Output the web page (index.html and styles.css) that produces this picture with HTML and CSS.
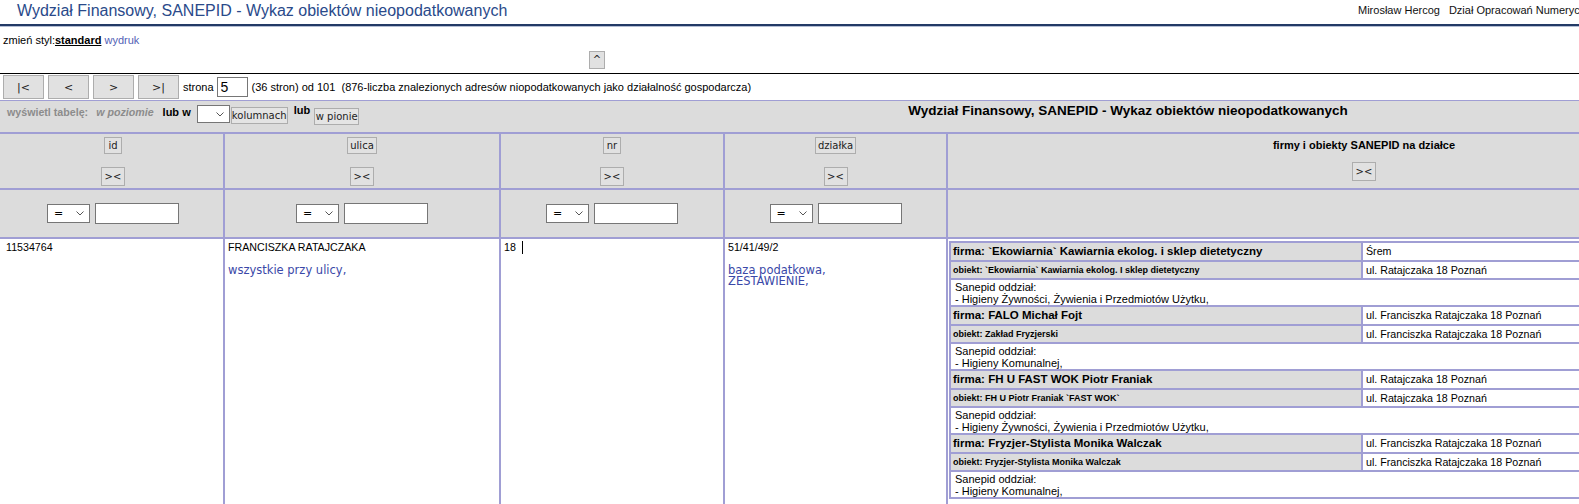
FILE: index.html
```html
<!DOCTYPE html>
<html lang="pl">
<head>
<meta charset="utf-8">
<title>Wydział Finansowy, SANEPID - Wykaz obiektów nieopodatkowanych</title>
<link rel="stylesheet" href="styles.css">
</head>
<body>
<div class="page">
  <header class="topbar">
    <h1 class="page-title">Wydział Finansowy, SANEPID - Wykaz obiektów nieopodatkowanych</h1>
    <div class="user"><span>Mirosław Hercog</span><span>Dział Opracowań Numerycznych</span></div>
  </header>

  <div class="style-switch">zmień styl:<a class="style-cur" href="#">standard</a> <a class="style-alt" href="#">wydruk</a></div>

  <div class="collapse-row"><button class="btn btn-up" type="button">^</button></div>

  <nav class="pager">
    <button class="btn btn-nav" type="button">|&lt;</button>
    <button class="btn btn-nav" type="button">&lt;</button>
    <button class="btn btn-nav" type="button">&gt;</button>
    <button class="btn btn-nav" type="button">&gt;|</button>
    <span class="pager-label">strona</span>
    <input class="pager-input" type="text" value="5">
    <span class="pager-info">(36 stron) od 101&nbsp; (876-liczba znalezionych adresów niopodatkowanych jako działalność gospodarcza)</span>
  </nav>

  <div class="toolbar">
    <span class="tb-muted tb-first">wyświetl tabelę:</span>
    <span class="tb-muted tb-italic">w poziomie</span>
    <span class="tb-strong tb-lubw">lub w</span>
    <span class="fake-select tb-select"><span></span><svg class="chev" width="8" height="5" viewBox="0 0 8 5"><path d="M0.5 0.5 L4 4 L7.5 0.5" fill="none" stroke="#555" stroke-width="1"/></svg></span>
    <button class="btn btn-tb tb-kol" type="button">kolumnach</button>
    <span class="tb-strong tb-lub">lub</span>
    <button class="btn btn-tb tb-pion" type="button">w pionie</button>
    <span class="tb-title">Wydział Finansowy, SANEPID - Wykaz obiektów nieopodatkowanych</span>
  </div>

  <div class="grid">
    <div class="hcell hcell-first"><button class="btn btn-col" type="button">id</button><button class="btn btn-sort" type="button">&gt;&lt;</button></div>
    <div class="hcell"><button class="btn btn-col" type="button">ulica</button><button class="btn btn-sort" type="button">&gt;&lt;</button></div>
    <div class="hcell"><button class="btn btn-col" type="button">nr</button><button class="btn btn-sort" type="button">&gt;&lt;</button></div>
    <div class="hcell"><button class="btn btn-col" type="button">działka</button><button class="btn btn-sort" type="button">&gt;&lt;</button></div>
    <div class="hcell"><span class="hcell-title">firmy i obiekty SANEPID na działce</span><button class="btn btn-sort btn-sort-wide" type="button">&gt;&lt;</button></div>

    <div class="fcell fcell-first"><span class="fake-select filt-select"><span>=</span><svg class="chev" width="8" height="5" viewBox="0 0 8 5"><path d="M0.5 0.5 L4 4 L7.5 0.5" fill="none" stroke="#555" stroke-width="1"/></svg></span><input class="filt-input" type="text"></div>
    <div class="fcell"><span class="fake-select filt-select"><span>=</span><svg class="chev" width="8" height="5" viewBox="0 0 8 5"><path d="M0.5 0.5 L4 4 L7.5 0.5" fill="none" stroke="#555" stroke-width="1"/></svg></span><input class="filt-input" type="text"></div>
    <div class="fcell"><span class="fake-select filt-select"><span>=</span><svg class="chev" width="8" height="5" viewBox="0 0 8 5"><path d="M0.5 0.5 L4 4 L7.5 0.5" fill="none" stroke="#555" stroke-width="1"/></svg></span><input class="filt-input" type="text"></div>
    <div class="fcell"><span class="fake-select filt-select"><span>=</span><svg class="chev" width="8" height="5" viewBox="0 0 8 5"><path d="M0.5 0.5 L4 4 L7.5 0.5" fill="none" stroke="#555" stroke-width="1"/></svg></span><input class="filt-input" type="text"></div>
    <div class="fcell"></div>

    <div class="dcell dcell-first">11534764</div>
    <div class="dcell">FRANCISZKA RATAJCZAKA<div class="links">wszystkie przy ulicy,</div></div>
    <div class="dcell">18 <span class="caret"></span></div>
    <div class="dcell">51/41/49/2<div class="links">baza podatkowa,<br>ZESTAWIENIE,</div></div>
    <div class="dcell dcell-nest">
      <div class="nest">
        <div class="n-name n-firma">firma: `Ekowiarnia` Kawiarnia ekolog. i sklep dietetyczny</div>
        <div class="n-addr n-addr-firma">Śrem</div>
        <div class="n-name n-obiekt">obiekt: `Ekowiarnia` Kawiarnia ekolog. I sklep dietetyczny</div>
        <div class="n-addr n-addr-obiekt">ul. Ratajczaka 18 Poznań</div>
        <div class="n-san">Sanepid oddział:<br>- Higieny Żywności, Żywienia i Przedmiotów Użytku,</div>

        <div class="n-name n-firma">firma: FALO Michał Fojt</div>
        <div class="n-addr n-addr-firma">ul. Franciszka Ratajczaka 18 Poznań</div>
        <div class="n-name n-obiekt">obiekt: Zakład Fryzjerski</div>
        <div class="n-addr n-addr-obiekt">ul. Franciszka Ratajczaka 18 Poznań</div>
        <div class="n-san">Sanepid oddział:<br>- Higieny Komunalnej,</div>

        <div class="n-name n-firma">firma: FH U FAST WOK Piotr Franiak</div>
        <div class="n-addr n-addr-firma">ul. Ratajczaka 18 Poznań</div>
        <div class="n-name n-obiekt">obiekt: FH U Piotr Franiak `FAST WOK`</div>
        <div class="n-addr n-addr-obiekt">ul. Ratajczaka 18 Poznań</div>
        <div class="n-san">Sanepid oddział:<br>- Higieny Żywności, Żywienia i Przedmiotów Użytku,</div>

        <div class="n-name n-firma">firma: Fryzjer-Stylista Monika Walczak</div>
        <div class="n-addr n-addr-firma">ul. Franciszka Ratajczaka 18 Poznań</div>
        <div class="n-name n-obiekt">obiekt: Fryzjer-Stylista Monika Walczak</div>
        <div class="n-addr n-addr-obiekt">ul. Franciszka Ratajczaka 18 Poznań</div>
        <div class="n-san">Sanepid oddział:<br>- Higieny Komunalnej,</div>
      </div>
    </div>
  </div>
</div>
</body>
</html>
```

FILE: styles.css
```css
html, body {
  margin: 0;
  padding: 0;
  overflow: hidden;
  background: #fff;
}

body {
  font-family: "Liberation Sans", Arial, sans-serif;
  color: #000;
}

.page {
  width: 1780px;
}

/* ---------- top header ---------- */
.topbar {
  display: grid;
  grid-template-columns: 1358px auto;
  height: 24px;
  border-bottom: 2px solid #233a66;
  box-shadow: 0 1px 0 #b4bed4;
}

.page-title {
  margin: 0;
  padding: 2px 0 0 17px;
  font-size: 16px;
  font-weight: normal;
  line-height: 18px;
  color: #2a4a8a;
  white-space: nowrap;
}

.user {
  display: flex;
  gap: 9px;
  padding-top: 4px;
  font-size: 11px;
  line-height: 13px;
  color: #111;
  white-space: nowrap;
}

/* ---------- style switch ---------- */
.style-switch {
  height: 13px;
  padding: 8px 0 0 3px;
  font-size: 11px;
  line-height: 13px;
}

.style-cur {
  color: #000;
  font-weight: bold;
  text-decoration: underline;
}

.style-alt {
  color: #5361b6;
  text-decoration: none;
}

.collapse-row {
  display: flex;
  align-items: flex-start;
  height: 22px;
  padding-top: 4px;
  border-bottom: 1px solid #000;
}

/* ---------- buttons ---------- */
.btn {
  margin: 0;
  padding: 0 2px;
  box-sizing: border-box;
  font-family: "DejaVu Sans", sans-serif;
  font-size: 10px;
  line-height: 1;
  color: #222;
  background: #e1e1e1;
  border: 1px solid #adadad;
  border-radius: 0;
}

.btn-up {
  width: 16px;
  height: 18px;
  margin-left: 589px;
  padding: 0;
  font-size: 10px;
}

.btn-nav {
  width: 41px;
  height: 24px;
  font-size: 11px;
}

.btn-tb {
  height: 17px;
  padding: 0;
  background: #e4e4e4;
}

.btn-col {
  min-width: 18px;
  height: 17px;
}

.btn-sort {
  width: 24px;
  height: 19px;
  margin-top: 13px;
  padding: 0;
}

.btn-sort-wide {
  margin-top: 10px;
}

/* ---------- pager ---------- */
.pager {
  display: flex;
  align-items: center;
  gap: 4px;
  height: 26px;
  padding-left: 3px;
  font-size: 11px;
  white-space: nowrap;
}

.pager-input {
  width: 31px;
  height: 20px;
  margin: 0 0 0 -1px;
  padding: 0 3px;
  box-sizing: border-box;
  font-family: "Liberation Sans", Arial, sans-serif;
  font-size: 14px;
  border: 1px solid #767676;
  border-radius: 0;
}

/* ---------- toolbar ---------- */
.toolbar {
  display: flex;
  align-items: flex-start;
  height: 31px;
  background: #dcdcdc;
  border-top: 1px solid #a09ed4;
  white-space: nowrap;
}

.tb-muted {
  margin-top: 5px;
  font-size: 10.67px;
  font-weight: bold;
  line-height: 13px;
  color: #8c8c8c;
}

.tb-first {
  margin-left: 7px;
}

.tb-italic {
  margin-left: 8px;
  font-style: italic;
}

.tb-strong {
  font-size: 11px;
  font-weight: bold;
  line-height: 13px;
}

.tb-lubw {
  margin-left: 9px;
  margin-top: 5px;
}

.tb-select {
  width: 33px;
  height: 18px;
  margin-left: 6px;
  margin-top: 4px;
}

.tb-kol {
  margin-left: 1px;
  margin-top: 6px;
  width: 57px;
}

.tb-lub {
  margin-left: 6px;
  margin-top: 3px;
}

.tb-pion {
  margin-left: 4px;
  margin-top: 7px;
  width: 45px;
}

.tb-title {
  margin-left: 549px;
  margin-top: 2px;
  font-size: 13.5px;
  font-weight: bold;
  line-height: 16px;
}

/* ---------- fake selects / inputs ---------- */
.fake-select {
  display: inline-flex;
  align-items: center;
  justify-content: space-between;
  box-sizing: border-box;
  padding: 0 5px 0 6px;
  font-family: "DejaVu Sans", sans-serif;
  font-size: 11px;
  background: #fff;
  border: 1px solid #767676;
}

.chev {
  display: block;
}

.filt-select {
  width: 43px;
  height: 19px;
}

.filt-input {
  width: 84px;
  height: 21px;
  margin: 0;
  padding: 0 2px;
  box-sizing: border-box;
  border: 1px solid #767676;
  border-radius: 0;
  background: #fff;
}

/* ---------- main grid ---------- */
.grid {
  display: grid;
  grid-template-columns: 223px 274px 222px 221px 832px;
  grid-template-rows: 54px 47px 300px;
  gap: 2px;
  background: #a09ed4;
  border-top: 2px solid #a09ed4;
}

.hcell {
  display: flex;
  flex-direction: column;
  align-items: center;
  padding-top: 3px;
  background: #dcdcdc;
}

.hcell-first {
  padding-left: 3px;
}

.hcell-title {
  margin-top: 2px;
  font-size: 11px;
  font-weight: bold;
  line-height: 13px;
}

.fcell {
  display: flex;
  justify-content: center;
  align-items: center;
  gap: 5px;
  background: #dcdcdc;
}

.fcell-first {
  padding-left: 3px;
}

.dcell {
  padding: 2px 3px;
  font-size: 10.67px;
  line-height: 12px;
  background: #fff;
}

.dcell-first {
  padding-left: 6px;
}

.links {
  margin-top: 12px;
  font-family: "DejaVu Sans", sans-serif;
  font-size: 11.5px;
  line-height: 11px;
  color: #3a48a8;
}

.caret {
  display: inline-block;
  width: 1px;
  height: 13px;
  margin-left: 3px;
  vertical-align: top;
  background: #000;
}

/* ---------- nested firm table ---------- */
.dcell-nest {
  padding: 2px 0 0 1px;
}

.nest {
  display: grid;
  grid-template-columns: 410px 413px;
  gap: 2px;
  padding: 2px;
  width: max-content;
  background: #a09ed4;
}

.n-name {
  padding-left: 2px;
  background: #dcdcdc;
  font-weight: bold;
  white-space: nowrap;
}

.n-firma {
  height: 17px;
  font-size: 11.5px;
  line-height: 17px;
}

.n-obiekt {
  height: 16px;
  font-size: 9px;
  line-height: 16px;
}

.n-addr {
  padding-left: 3px;
  font-size: 10.67px;
  background: #fff;
  white-space: nowrap;
}

.n-addr-firma {
  line-height: 17px;
}

.n-addr-obiekt {
  line-height: 16px;
}

.n-san {
  grid-column: 1 / -1;
  box-sizing: border-box;
  height: 25px;
  padding: 1px 0 0 4px;
  font-size: 11px;
  line-height: 12px;
  background: #fff;
}
```
